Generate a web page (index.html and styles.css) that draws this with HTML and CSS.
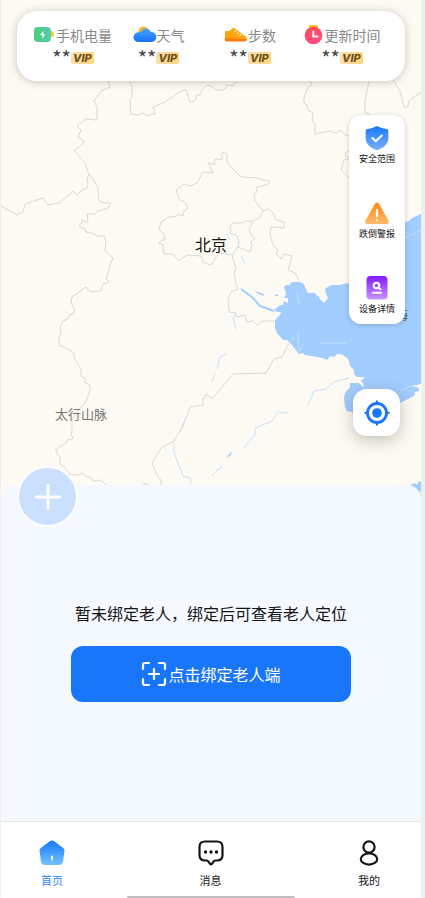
FILE: index.html
```html
<!DOCTYPE html>
<html lang="zh-CN">
<head>
<meta charset="utf-8">
<meta name="viewport" content="width=device-width, initial-scale=1">
<title>首页</title>
<link rel="stylesheet" href="styles.css">
</head>
<body>
<div class="app">
  <main class="home">
    <section class="map">
      <svg class="map-art" viewBox="1 0 420 520" aria-hidden="true">
        <rect x="1" width="420" height="520" fill="#fcfaf2"/>
        <path fill="#a2cdff" d="M285 290 284 287 286 285 289 285 292 282 298 282 303 283 308 293 315 293 317 296 320 294 324 293 326 288 328 287 332 285 340 285 348 283 365 278 380 258 398 229 405 222 409 221 412 218 421 214V384L412 386 419 388 419 391 415 392 414 396 410 398 400 403 390 406 375 414 354 416 352 412 347 411 345 407 344 398 345 393 350 387 350 383 359 383 364 388 363 383 361 381 365 377 357 377 354 374 354 370 350 366 349 361 347 358 341 354 337 354 334 357 330 356 327 360 322 358 305 355 303 353 299 354 292 345 289 342 287 340 283 340 277 333 275 328 275 320 280 315 281 312 277 312 274 310 280 305 283 305 284 301 288 303 288 298 284 298 286 294Z"/>
        <path fill="#fcfaf2" d="M316 292 325 291 328 298 324 303 320 299Z"/>
        <path fill="#a2cdff" d="M410 485 415 483 417 485 419 481 421 482V493L417 490ZM419 495 421 494V504ZM226 458 233 450 230 456ZM275 296 276 294 279 296ZM255 291 264 294 263 296 257 293Z"/>
        <g class="border">
          <path d="M108 81 110 87 101 91 94 101 97 107 97 120 86 119 77 126 81 130 78 137 84 141 83 144 78 148 74 150 85 163 89 175 87 178 88 184 87 188 82 190 77 195 73 191 59 203 48 205 43 198 25 204 23 212 17 215 1 206"/>
          <path d="M89 175 91 176 94 181 98 187 99 201 104 203 111 203 108 208 98 211 95 214 87 214 88 222 85 222 82 219 82 222 79 226 85 229 86 232 95 234 96 236 104 236 106 241 105 251 113 258 110 265 109 271 106 279 109 281 107 283 103 284 101 291 90 292 86 287 72 297 71 303 75 310 73 314 69 315 68 319 63 321 60 327 61 333 59 337 59 345 70 350 74 353 74 358 81 369 81 376 86 379 84 382 90 385 90 391 85 403 78 411 72 419 72 430 71 434 73 438 71 440 68 439 66 443 55 450 57 451 57 454 60 457 60 464 65 468 70 474 78 475 83 473 84 475 91 478 93 481 100 480 107 485"/>
          <path d="M129 81 132 86 132 97 130 100 131 114 139 115 142 113 149 116 151 114 155 114 153 107 165 102 181 91 186 90 190 102 195 101 197 95 200 95 202 90 207 85 213 87 216 90 222 90 226 88 227 85 233 86 236 82"/>
          <path d="M310 81 312 85 308 87 304 98 304 103 307 105 308 110 313 113 312 120 315 124 315 134 330 131 336 133 341 130 345 135 350 136M369 81 365 100 365 112 370 115M393 80 400 91 404 107 408 107 409 101 414 97 421 92M349 151 345 153 346 157 350 158M349 159 344 160 341 170 349 178"/>
          <path d="M222 160 222 153 225 152 227 155 227 162 233 169 241 177 258 178 263 180 270 181 268 184 256 188 257 192 254 194 255 201 263 211 260 217 253 221 245 221 242 223 233 223 230 226 231 234 236 235 239 240 238 247 232 255 220 253 215 258 213 263 210 265 203 262 201 256 188 255 182 258 179 261 173 254 164 254 163 245 159 243 162 240 165 240 164 234 159 229 161 222 169 217 177 216 179 214 183 216 184 211 188 208 185 202 179 199 176 190 184 184 190 186 197 183 203 172 213 173 208 162 214 165 215 159Z"/>
          <path d="M253 221 249 230 252 236 255 238 251 242 252 246 250 252 238 247M263 211 268 209 273 213 276 220 284 222 284 228 271 227 270 235 273 245 278 250 276 254 281 259 284 254 292 256 291 260 288 270 295 273 299 281"/>
          <path d="M232 255 236 268 234 273 236 284 238 289 231 292 228 299 229 312 236 313 236 317 245 315 247 322 253 321 257 325 263 321 275 321M295 337 289 343 282 357 274 359 266 373 233 374 212 399 206 394 205 398 202 399 204 405 190 407 188 413 182 428 173 442 162 447 152 463 156 473 158 477 161 480V485M143 483 149 485"/>
        </g>
        <g class="river">
          <path d="M174 443 174 453 183 476 190 478 191 484M186 417 181 429M226 354 220 357 217 369M215 373 212 382M244 448 255 435 255 428 272 421 278 412 288 413M308 405 314 391 326 389 334 382 349 378M212 476 217 470 222 468 220 465M226 233 230 240M241 256 245 264M236 313 233 319 236 329"/>
          <path class="wide" d="M241 289 252 297 260 306 274 311"/>
        </g>
        <path class="shoal" d="M298 332 299 350M303 344 300 352M320 343H346M297 292 299 304M405 238 421 230M400 391 413 385"/>
      </svg>
      <span class="place city">北京</span>
      <span class="place range">太行山脉</span>
      <span class="place sea">海</span>

      <div class="stats">
        <div class="stat">
          <div class="stat-name">
            <svg width="20" height="18" viewBox="0 0 20 18" aria-hidden="true">
              <defs><linearGradient id="bat"><stop stop-color="#47cf79"/><stop offset="1" stop-color="#55cbae"/></linearGradient></defs>
              <rect x="14" y="5" width="6" height="6" rx="2" fill="#ffc845"/><rect y="1" width="17" height="15" rx="4" fill="url(#bat)"/><path d="M9.500 5 6 9H8.300L8 12.500 11.500 8.200H9.200Z" fill="#fff"/>
            </svg>手机电量
          </div>
          <div class="stat-value">**<span class="vip">VIP</span></div>
        </div>
        <div class="stat">
          <div class="stat-name tight">
            <svg width="24" height="18" viewBox="0 0 24 18" aria-hidden="true">
              <defs><linearGradient id="cloud" x2="0" y2="1"><stop stop-color="#45a2ff"/><stop offset="1" stop-color="#1675fc"/></linearGradient></defs>
              <circle cx="10.500" cy="5.500" r="5" fill="#ffb333"/><path d="M6 16C2.600 16 .5 13.800 .5 11.200.5 8.500 2.700 6.300 5.600 6.300 7 6 7.800 5.800 8.800 5 9.800 3.200 11.400 2.500 13 2.500c2.500 0 4 1.300 4.700 3.200 3.300.2 5.600 2.300 5.600 5.300S20.800 16 17.500 16Z" fill="url(#cloud)"/>
            </svg>天气
          </div>
          <div class="stat-value">**<span class="vip">VIP</span></div>
        </div>
        <div class="stat">
          <div class="stat-name tight">
            <svg width="24" height="18" viewBox="0 0 24 18" aria-hidden="true">
              <path d="M1.500 4.500C3 6 6 5.500 8.300 2.300Q9.500 1.200 11 2.500L19.500 9Q22.500 9.800 22.700 13H1V5.500Z" fill="#ffa40c"/><path d="M.8 12 13 13H23V13.500Q23 15.500 20.500 15.500H2.500Q.8 15.500.8 13.500Z" fill="#ff7b13"/><path d="M10.800 5.700 11.800 4.900M13.300 7.700 14.300 6.900M15.800 9.500 16.800 8.700" stroke="#fff" stroke-width="1.200" stroke-linecap="round"/>
            </svg>步数
          </div>
          <div class="stat-value">**<span class="vip">VIP</span></div>
        </div>
        <div class="stat">
          <div class="stat-name">
            <svg width="19" height="20" viewBox="0 0 19 20" aria-hidden="true">
              <defs><linearGradient id="clk" x2="0" y2="1"><stop stop-color="#ff4b55"/><stop offset="1" stop-color="#ff4f85"/></linearGradient></defs>
              <rect x="5" y="0" width="9" height="5" rx="2" fill="#ffb61c"/><circle cx="9.500" cy="10.500" r="8.800" fill="url(#clk)"/><path d="M9.300 6.500V11.500H13.500" fill="none" stroke="#fff" stroke-width="2" stroke-linecap="round" stroke-linejoin="round"/>
            </svg>更新时间
          </div>
          <div class="stat-value">**<span class="vip">VIP</span></div>
        </div>
      </div>

      <div class="tools">
        <button class="tool" type="button">
          <svg width="24" height="24" viewBox="0 0 24 24" aria-hidden="true">
            <defs><linearGradient id="shield" x2="0" y2="1"><stop stop-color="#1876fa"/><stop offset="1" stop-color="#7bb2ff"/></linearGradient></defs>
            <path d="M12 0Q17 2.700 22.500 3.300 23.300 3.500 23.300 4.500V12C23.300 18 18.500 22 12 24.300 5.500 22 .7 18 .7 12V4.500Q.7 3.500 1.500 3.300 7 2.700 12 0Z" fill="url(#shield)"/><path d="M7.300 12 10.800 15.300 16.800 9.500" fill="none" stroke="#fff" stroke-width="2" stroke-linecap="round" stroke-linejoin="round"/>
          </svg>
          <span>安全范围</span>
        </button>
        <button class="tool" type="button">
          <svg width="24" height="24" viewBox="0 0 24 24" aria-hidden="true">
            <defs><linearGradient id="warn" x2="0" y2="1"><stop stop-color="#ff8712"/><stop offset="1" stop-color="#ffb96b"/></linearGradient></defs>
            <path d="M9.800 3Q12 0 14.200 3L23.500 19.500Q24.700 23 21.500 23H2.500Q-.7 23 .5 19.500Z" fill="url(#warn)"/><path d="M12 9V15.500M12 19V19.200" stroke="#fff" stroke-width="2.200" stroke-linecap="round"/>
          </svg>
          <span>跌倒警报</span>
        </button>
        <button class="tool" type="button">
          <svg width="24" height="24" viewBox="0 0 24 24" aria-hidden="true">
            <defs><linearGradient id="dev" x2="0" y2="1"><stop stop-color="#8417fa"/><stop offset="1" stop-color="#c995ff"/></linearGradient></defs>
            <rect x="1.500" y="0" width="21" height="23.500" rx="4" fill="url(#dev)"/><circle cx="11.500" cy="9.500" r="2.800" fill="none" stroke="#fff" stroke-width="2"/><path d="M13.500 11.500 15.500 13.300M8 16.800H16" stroke="#fff" stroke-width="2" stroke-linecap="round"/>
          </svg>
          <span>设备详情</span>
        </button>
      </div>

      <button class="locate" type="button" aria-label="定位">
        <svg width="26" height="26" viewBox="0 0 26 26" aria-hidden="true">
          <g fill="none" stroke="#1876fa"><circle cx="13" cy="13" r="9.500" stroke-width="2.800"/><path d="M13 .5V4M13 22V25.500M.5 13H4M22 13H25.500" stroke-width="2"/></g><circle cx="13" cy="13" r="4.800" fill="#1876fa"/>
        </svg>
      </button>
    </section>

    <section class="bind">
      <button class="add" type="button" aria-label="添加">
        <svg width="26" height="26" viewBox="0 0 26 26" aria-hidden="true"><path d="M13 1.500V24.500M1.500 13H24.500" stroke="#fff" stroke-width="3" stroke-linecap="round"/></svg>
      </button>
      <p class="hint">暂未绑定老人，绑定后可查看老人定位</p>
      <button class="bind-button" type="button">
        <svg width="26" height="26" viewBox="0 0 26 26" aria-hidden="true"><path d="M2 8V4Q2 2 4 2H8M18 2H22Q24 2 24 4V8M24 18V22Q24 24 22 24H18M8 24H4Q2 24 2 22V18M13 8V18M8 13H18" fill="none" stroke="#fff" stroke-width="2.200" stroke-linecap="round"/></svg>点击绑定老人端
      </button>
    </section>
  </main>

  <nav class="tabs">
    <a class="tab active" href="#home">
      <svg width="26" height="26" viewBox="0 0 26 26" aria-hidden="true">
        <defs><linearGradient id="house" x2="0" y2="1"><stop stop-color="#1876fa"/><stop offset="1" stop-color="#71c3ff"/></linearGradient></defs>
        <path d="M10.500 1.500Q13 -.3 15.500 1.500L24 7.800Q25.700 9.200 25.400 11.500L24 21.500Q23.400 25 20 25H6Q2.600 25 2 21.500L.6 11.500Q.3 9.200 2 7.800Z" fill="url(#house)"/><path d="M13 16.500V19.500" stroke="#fff" stroke-width="1.800" stroke-linecap="round"/>
      </svg>
      <span>首页</span>
    </a>
    <a class="tab" href="#messages">
      <svg width="26" height="26" viewBox="0 0 26 26" aria-hidden="true">
        <path d="M7 1.500H19Q24.500 1.500 24.500 7V15Q24.500 20.500 19 20.500H17.500Q16.500 20.500 16 21.200L13.800 24Q13 24.800 12.200 24L10 21.200Q9.500 20.500 8.500 20.500H7Q1.500 20.500 1.500 15V7Q1.500 1.500 7 1.500Z" fill="none" stroke="#151515" stroke-width="2.200"/><g fill="#151515"><circle cx="7.500" cy="12" r="1.700"/><circle cx="13" cy="12" r="1.700"/><circle cx="18.500" cy="12" r="1.700"/></g>
      </svg>
      <span>消息</span>
    </a>
    <a class="tab" href="#mine">
      <svg width="26" height="26" viewBox="0 0 26 26" aria-hidden="true">
        <g fill="none" stroke="#151515" stroke-width="2.200"><circle cx="13" cy="7" r="5.600"/><ellipse cx="13" cy="19" rx="8.200" ry="5.600"/></g>
      </svg>
      <span>我的</span>
    </a>
    <span class="home-indicator"></span>
  </nav>
</div>
</body>
</html>
```
FILE: styles.css
```css
* {
  box-sizing: border-box;
}

body {
  margin: 0;
  background: #efefef;
  color: #151515;
  font-family: "Noto Sans CJK SC", sans-serif;
}

button {
  margin: 0;
  padding: 0;
  border: 0;
  color: inherit;
  font: inherit;
}

svg {
  flex: none;
}

.app {
  display: flex;
  flex-direction: column;
  min-height: 100vh;
  margin: 0 4px 0 1px;
}

.home {
  display: flex;
  flex: 1;
  flex-direction: column;
  overflow: hidden;
  background: #fcfaf2;
}

.map {
  position: relative;
  display: flex;
  flex-direction: column;
  align-items: flex-end;
  padding: 11px 16px 49px;
}

.map-art {
  position: absolute;
  top: 0;
  left: 0;
  width: 100%;
}

.border,
.river,
.shoal {
  fill: none;
  stroke-linejoin: round;
}

.border {
  stroke: #d8dad4;
}

.river {
  stroke: #c9e2fb;
}

.river .wide {
  stroke: #a2cdff;
  stroke-width: 2;
}

.shoal {
  stroke: #c3dffb;
}

.place {
  position: absolute;
  line-height: 20px;
}

.city {
  top: 234px;
  left: 194px;
  font-size: 16px;
}

.range {
  top: 404px;
  left: 54px;
  color: #777;
  font-size: 13px;
}

.sea {
  top: 305px;
  right: 13px;
  color: #46576d;
  font-size: 12px;
}

.stats {
  position: relative;
  display: grid;
  grid-template-columns: 86fr 85fr 98fr 86fr;
  align-self: stretch;
  padding: 14px 20px 13px 13px;
  border-radius: 20px;
  background: #fff;
  box-shadow: 0 1px 8px rgba(80, 75, 60, 0.3);
}

.stat {
  display: flex;
  flex-direction: column;
  align-items: center;
  gap: 3px;
}

.stat-name {
  display: flex;
  align-items: center;
  gap: 2px;
  color: #888;
  font-size: 14px;
  line-height: 20px;
  white-space: nowrap;
}

.stat-name.tight {
  gap: 0;
}

.stat-value {
  display: flex;
  align-items: center;
  color: #444;
  font-size: 20px;
  line-height: 20px;
}

.vip {
  width: 23px;
  border-radius: 2px;
  background: linear-gradient(90deg, #f5dfb0, #ffd676);
  color: #71501f;
  font-family: Inter, sans-serif;
  font-size: 11px;
  font-style: italic;
  font-weight: 800;
  line-height: 12px;
  text-align: center;
}

.tools {
  position: relative;
  display: flex;
  flex-direction: column;
  gap: 36px;
  width: 56px;
  margin-top: 34px;
  padding: 11px 0 9px;
  border-radius: 12px;
  background: #fff;
  box-shadow: 0 1px 4px rgba(60, 60, 60, 0.25);
}

.tool {
  display: flex;
  flex-direction: column;
  align-items: center;
  gap: 3px;
  background: none;
  font-size: 9px;
  line-height: 12px;
}

.locate {
  position: relative;
  display: grid;
  place-items: center;
  width: 47px;
  height: 47px;
  margin: 65px 5px 0 0;
  border-radius: 14px;
  background: #fff;
  box-shadow: 0 4px 16px rgba(60, 60, 50, 0.3);
}

.bind {
  position: relative;
  display: flex;
  flex: 1;
  flex-direction: column;
  align-items: center;
  justify-content: center;
  gap: 22px;
  padding: 60px 70px 62px;
  border-radius: 14px 14px 0 0;
  background: #f4f8ff;
}

.add {
  position: absolute;
  top: -19px;
  left: 16px;
  display: grid;
  place-items: center;
  width: 61px;
  height: 61px;
  border: 2px solid #fff;
  border-radius: 50%;
  background: #cbe0ff;
}

.hint {
  margin: 0;
  font-size: 16px;
  line-height: 22px;
  white-space: nowrap;
}

.bind-button {
  display: flex;
  align-items: center;
  align-self: stretch;
  justify-content: center;
  gap: 1px;
  padding: 15px 0;
  border-radius: 12px;
  background: #1976fb;
  color: #fff;
  font-size: 16px;
  line-height: 26px;
}

.tabs {
  position: relative;
  display: flex;
  justify-content: space-between;
  padding: 18px 39px 10px 38px;
  border-top: 1px solid #e4e7ec;
  background: #fff;
}

.tab {
  display: flex;
  flex-direction: column;
  align-items: center;
  gap: 6px;
  color: #151515;
  font-size: 11px;
  line-height: 16px;
  text-decoration: none;
}

.tab.active {
  color: #2f86fb;
}

.home-indicator {
  position: absolute;
  bottom: 0;
  left: 50%;
  width: 40%;
  height: 2px;
  border-radius: 2px 2px 0 0;
  background: #bdbdbd;
  transform: translateX(-50%);
}
```
